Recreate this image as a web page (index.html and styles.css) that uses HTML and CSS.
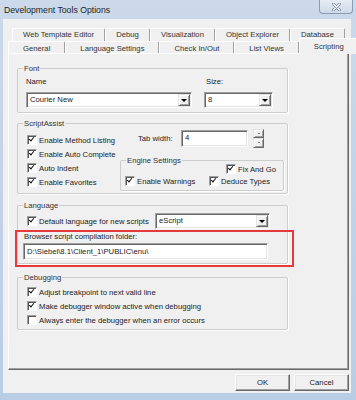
FILE: index.html
```html
<!DOCTYPE html>
<html lang="en">
<head>
  <meta charset="UTF-8">
  <title>Development Tools Options</title>
  <link rel="stylesheet" href="styles.css">
</head>
<body>
  <div class="window">
    <div class="titlebar">
      <span class="title">Development Tools Options</span>
      <span class="close">
        <svg width="9" height="8" viewBox="0 0 9 8">
          <path d="M1.5 1 L7.5 7 M7.5 1 L1.5 7" stroke="#6d7d92" stroke-width="2.6" stroke-linecap="round"/>
          <path d="M1.5 1 L7.5 7 M7.5 1 L1.5 7" stroke="#fff" stroke-width="1.3" stroke-linecap="round"/>
        </svg>
      </span>
    </div>

    <div class="client">
      <div class="tabrow back">
        <span class="tab">Web Template Editor</span>
        <span class="tab">Debug</span>
        <span class="tab">Visualization</span>
        <span class="tab">Object Explorer</span>
        <span class="tab">Database</span>
      </div>
      <div class="tabrow front">
        <span class="tab">General</span>
        <span class="tab">Language Settings</span>
        <span class="tab">Check In/Out</span>
        <span class="tab">List Views</span>
        <span class="tab active">Scripting</span>
      </div>

      <div class="panel">
        <!-- Font -->
        <div class="group font-group">
          <span class="legend">Font</span>
          <div class="font-row">
            <div class="field">
              <span class="label">Name</span>
              <div class="combo name-combo"><span class="value">Courier New</span><span class="drop"></span></div>
            </div>
            <div class="field">
              <span class="label size-label">Size:</span>
              <div class="combo size-combo"><span class="value">8</span><span class="drop"></span></div>
            </div>
          </div>
        </div>

        <!-- ScriptAssist -->
        <div class="group assist-group">
          <span class="legend">ScriptAssist</span>
          <div class="assist-left">
            <div class="check"><span class="cb on"></span>Enable Method Listing</div>
            <div class="check"><span class="cb on"></span>Enable Auto Complete</div>
            <div class="check"><span class="cb on"></span>Auto Indent</div>
            <div class="check"><span class="cb on"></span>Enable Favorites</div>
          </div>
          <div class="assist-right">
            <div class="tabw-row">
              <span class="tabw-label">Tab width:</span>
              <div class="edit tabw-edit"><span class="value">4</span></div>
              <div class="spin"><span class="spin-btn up"></span><span class="spin-btn down"></span></div>
            </div>
            <div class="group engine-group">
              <span class="legend">Engine Settings</span>
              <div class="engine-row first"><div class="check"><span class="cb on"></span>Fix And Go</div></div>
              <div class="engine-row">
                <div class="check warn"><span class="cb on"></span>Enable Warnings</div>
                <div class="check"><span class="cb on"></span>Deduce Types</div>
              </div>
            </div>
          </div>
        </div>

        <!-- Language -->
        <div class="group lang-group">
          <span class="legend">Language</span>
          <div class="lang-row">
            <div class="check lang-check"><span class="cb on"></span>Default language for new scripts</div>
            <div class="combo lang-combo"><span class="value">eScript</span><span class="drop"></span></div>
          </div>
          <span class="label folder-label">Browser script compilation folder:</span>
          <div class="edit folder-edit"><span class="value">D:\Siebel\8.1\Client_1\PUBLIC\enu\</span></div>
          <div class="highlight"></div>
        </div>

        <!-- Debugging -->
        <div class="group debug-group">
          <span class="legend">Debugging</span>
          <div class="check"><span class="cb on"></span>Adjust breakpoint to next valid line</div>
          <div class="check"><span class="cb on"></span>Make debugger window active when debugging</div>
          <div class="check"><span class="cb"></span>Always enter the debugger when an error occurs</div>
        </div>
      </div>

      <div class="buttons">
        <button class="btn">OK</button>
        <button class="btn">Cancel</button>
      </div>
    </div>
  </div>
</body>
</html>
```

FILE: styles.css
```css
body {
  margin: 0;
  font-family: 'Liberation Sans', Arial, sans-serif;
  font-size: 7.7px;
  color: #222;
}
.window {
  width: 356px;
  height: 400px;
  box-sizing: border-box;
  padding: 0 5px 7px 3px;
  display: flex;
  flex-direction: column;
  background: linear-gradient(#cbd9ea, #b9cde5);
}
.titlebar {
  height: 19px;
  display: flex;
  justify-content: space-between;
  align-items: flex-start;
}
.title {
  font-size: 8.7px;
  line-height: 20px;
  padding-left: 1px;
  color: #1d1d1d;
}
.close {
  width: 34px;
  height: 14px;
  margin-right: -2px;
  box-sizing: border-box;
  border: 1px solid #8a9db7;
  border-top: none;
  border-radius: 0 0 4px 4px;
  background: linear-gradient(#e6ecf4, #cfd9e7);
  display: flex;
  align-items: center;
  justify-content: center;
}
.client {
  flex: 1;
  background: #f0f0f0;
  padding-top: 9px;
  display: flex;
  flex-direction: column;
}

/* tabs */
.tabrow {
  display: flex;
}
.tabrow.back {
  margin-left: 9px;
  width: 333px;
  height: 13px;
}
.tabrow.front {
  margin-left: 5px;
  width: 341px;
  height: 12px;
  position: relative;
  z-index: 1;
}
.tab {
  flex: 1 1 auto;
  box-sizing: border-box;
  text-align: center;
  white-space: nowrap;
  border-top: 1px solid #fff;
  border-left: 1px solid #fff;
  border-right: 1px solid #a0a0a0;
  border-radius: 2px 2px 0 0;
  line-height: 12px;
  color: #333;
}
.back .tab {
  padding: 0 10px;
}
.front .tab {
  padding: 1px 14px 0;
}
.tab.active {
  height: 16px;
  margin-top: -3px;
  background: #f0f0f0;
  border-right: 1px solid #696969;
  box-shadow: inset -1px 0 #a0a0a0;
  padding-top: 1px;
  line-height: 13px;
}

/* page */
.panel {
  margin-left: 5px;
  width: 341px;
  height: 317px;
  box-sizing: border-box;
  border: 1px solid;
  border-color: #fff #696969 #696969 #fff;
  box-shadow: inset -1px -1px #a0a0a0;
  padding: 14px 0 0 8px;
  display: flex;
  flex-direction: column;
}
.group {
  position: relative;
  width: 271px;
  box-sizing: border-box;
  border: 1px solid #cdcdcd;
  border-radius: 2px;
  box-shadow: 1px 1px #fff;
}
.legend {
  position: absolute;
  top: -6px;
  left: 5px;
  padding: 0 1px;
  line-height: 11px;
  background: #f0f0f0;
  color: #333;
}
.label {
  line-height: 10px;
}
.value {
  padding-left: 3px;
  line-height: 12px;
  white-space: nowrap;
}

/* sunken edit / combo */
.combo,
.edit {
  height: 16px;
  box-sizing: border-box;
  background: #fff;
  border: 1px solid;
  border-color: #a0a0a0 #fff #fff #a0a0a0;
  box-shadow: inset 1px 1px #696969, inset -1px -1px #e3e3e3;
  display: flex;
  align-items: center;
  justify-content: space-between;
}
.drop {
  width: 12px;
  height: 12px;
  margin-right: 1px;
  box-sizing: border-box;
  background: #f0f0f0;
  border: 1px solid;
  border-color: #e3e3e3 #696969 #696969 #e3e3e3;
  box-shadow: inset 1px 1px #fff, inset -1px -1px #a0a0a0;
  display: flex;
  align-items: center;
  justify-content: center;
}
.drop::after {
  content: '';
  border-left: 3px solid transparent;
  border-right: 3px solid transparent;
  border-top: 3px solid #000;
}

/* checkboxes */
.check {
  display: flex;
  align-items: center;
  gap: 2px;
  height: 14px;
  white-space: nowrap;
}
.cb {
  width: 10px;
  height: 10px;
  flex: none;
  box-sizing: border-box;
  background: #fff;
  border: 1px solid;
  border-color: #a0a0a0 #fff #fff #a0a0a0;
  box-shadow: inset 1px 1px #555;
  position: relative;
}
.cb.on::after {
  content: '';
  position: absolute;
  left: 2px;
  top: 0px;
  width: 2px;
  height: 4px;
  border: solid #111;
  border-width: 0 1.5px 1.5px 0;
  transform: rotate(40deg);
}

/* font */
.font-group {
  padding: 8px 0 4px 8px;
}
.font-row {
  display: flex;
  gap: 12px;
}
.field {
  display: flex;
  flex-direction: column;
  gap: 5px;
}
.name-combo {
  width: 166px;
}
.size-combo {
  width: 69px;
}
.size-label {
  padding-left: 2px;
}

/* script assist */
.assist-group {
  margin-top: 10px;
  padding: 5px 3px 2px 9px;
  display: flex;
}
.assist-left {
  width: 93px;
  margin-top: 4px;
}
.assist-right {
  width: 164px;
}
.tabw-row {
  height: 18px;
  display: flex;
  align-items: center;
}
.tabw-label {
  margin-left: 18px;
  width: 35px;
}
.tabw-edit {
  margin-left: 8px;
  width: 67px;
  height: 17px;
}
.spin {
  margin-left: 5px;
  width: 11px;
  height: 19px;
  display: flex;
  flex-direction: column;
}
.spin-btn {
  flex: 1;
  box-sizing: border-box;
  background: #f0f0f0;
  border: 1px solid;
  border-color: #e3e3e3 #696969 #696969 #e3e3e3;
  box-shadow: inset 1px 1px #fff, inset -1px -1px #a0a0a0;
  display: flex;
  align-items: center;
  justify-content: center;
}
.spin-btn.up::after {
  content: '';
  border-left: 1.5px solid transparent;
  border-right: 1.5px solid transparent;
  border-bottom: 1.5px solid #000;
}
.spin-btn.down::after {
  content: '';
  border-left: 1.5px solid transparent;
  border-right: 1.5px solid transparent;
  border-top: 1.5px solid #000;
}
.engine-group {
  width: 164px;
  margin-top: 13px;
  padding: 2px 0 3px 4px;
}
.engine-row {
  display: flex;
}
.engine-row .check {
  height: 12px;
}
.engine-row.first {
  padding-left: 101px;
}
.check.warn {
  width: 84px;
}

/* language */
.lang-group {
  margin-top: 11px;
  padding: 7px 17px 3px 5px;
  display: flex;
  flex-direction: column;
}
.lang-row {
  display: flex;
  align-items: center;
  height: 16px;
}
.lang-check {
  flex: 1;
  margin-left: 4px;
}
.lang-combo {
  width: 115px;
}
.folder-label {
  margin-top: 3px;
  padding-left: 1px;
}
.folder-edit {
  margin-top: 1px;
  width: 245px;
  height: 17px;
}
.highlight {
  position: absolute;
  left: -3px;
  top: 24px;
  width: 279px;
  height: 37px;
  box-sizing: border-box;
  border: 2px solid #e5393b;
}

/* debugging */
.debug-group {
  margin-top: 13px;
  padding: 7px 0 2px 9px;
}

/* buttons */
.buttons {
  display: flex;
  justify-content: flex-end;
  gap: 4px;
  margin-top: 4px;
  padding-right: 2px;
}
.btn {
  width: 55px;
  height: 17px;
  padding: 0;
  font-family: inherit;
  font-size: 7.7px;
  color: #222;
  background: #f0f0f0;
  border: 1px solid;
  border-color: #fff #696969 #696969 #fff;
  box-shadow: inset -1px -1px #a0a0a0, inset 1px 1px #e3e3e3;
}
```
